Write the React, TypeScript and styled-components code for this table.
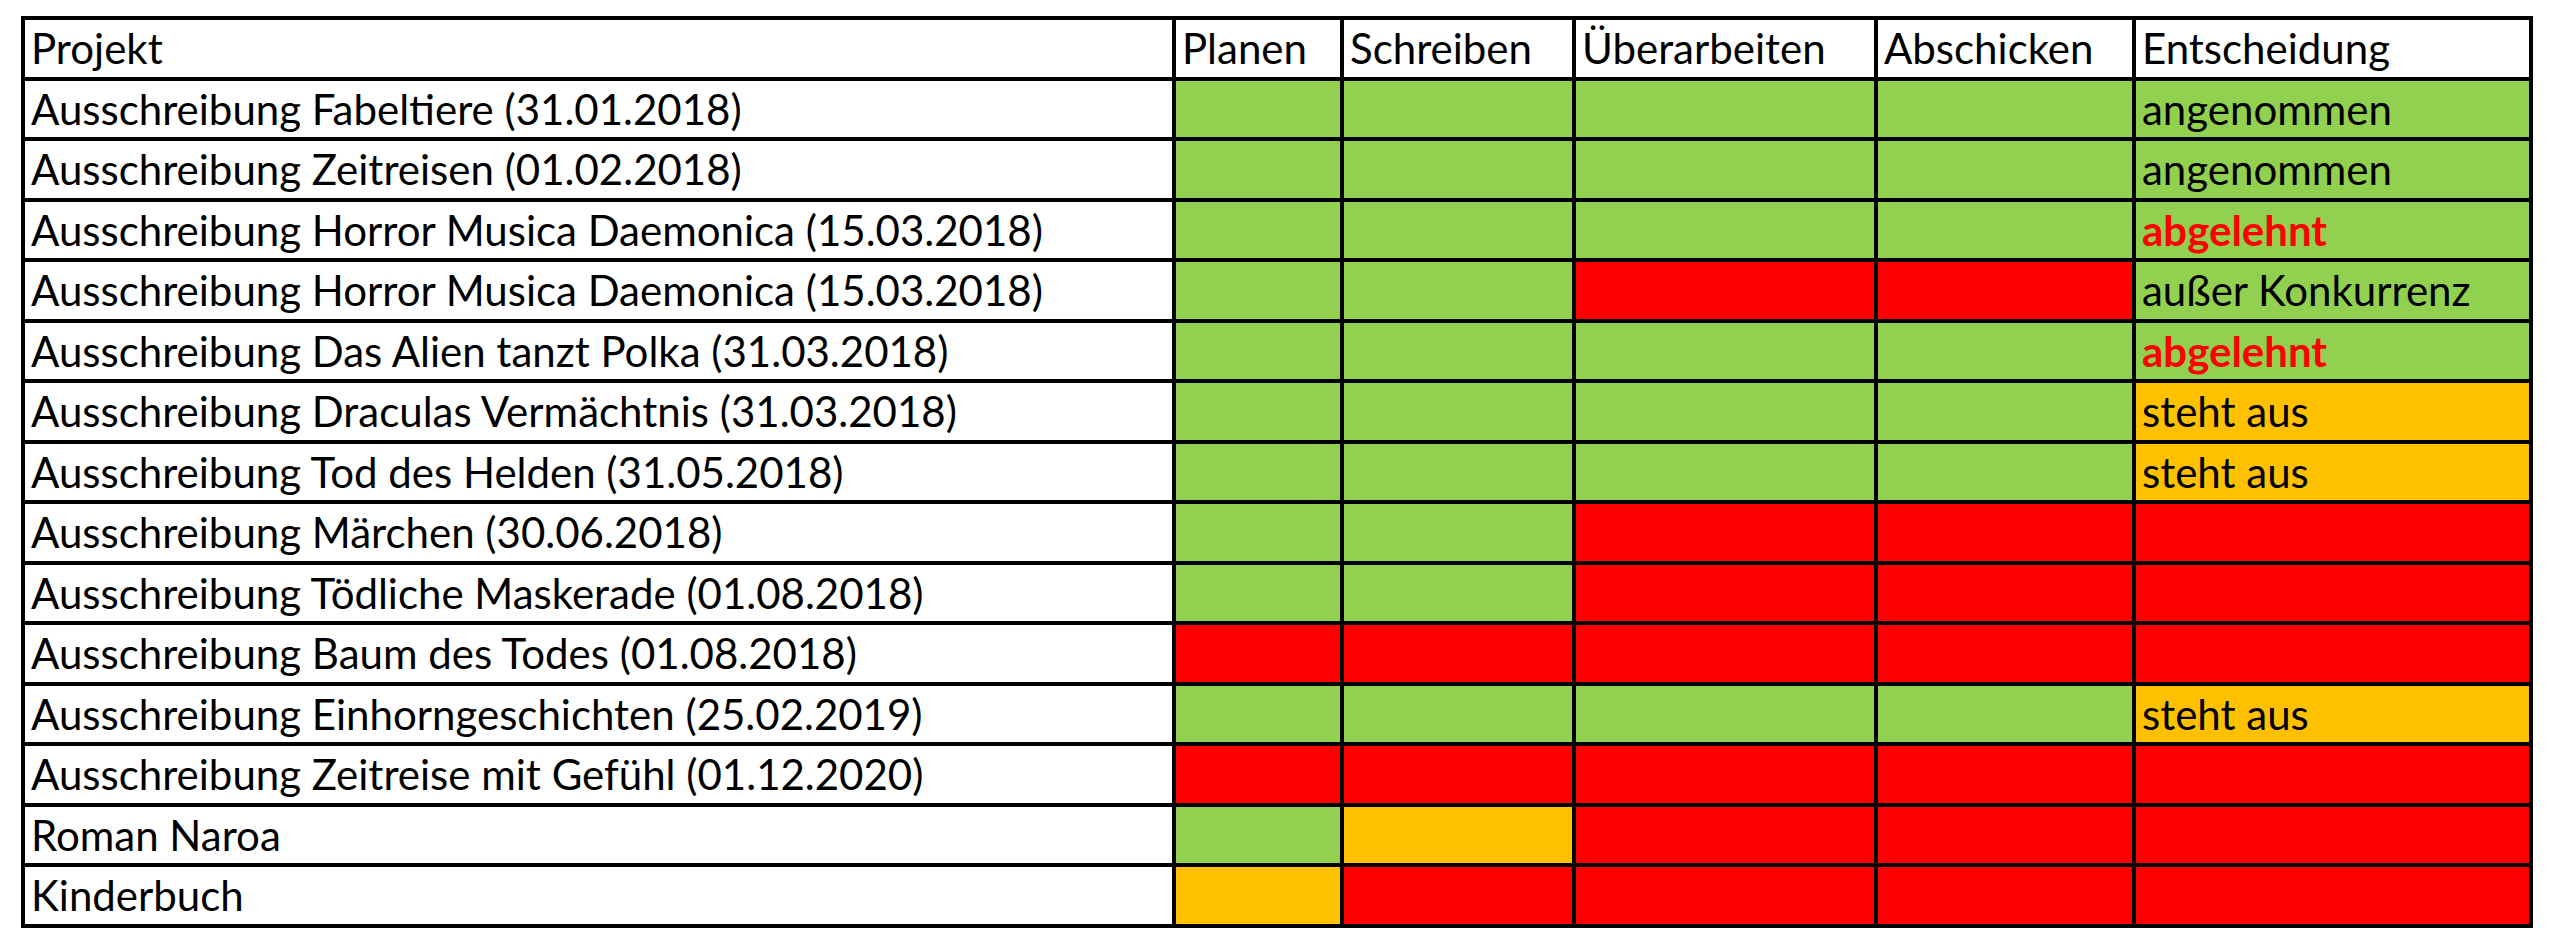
import React from "react";
import styled, { createGlobalStyle } from "styled-components";

type Fill = "none" | "green" | "red" | "orange";

const fills: Record<Fill, string> = {
  none: "#ffffff",
  green: "#92d050",
  red: "#ff0000",
  orange: "#ffc000",
};

const GlobalStyle = createGlobalStyle`
  html, body {
    margin: 0;
    padding: 0;
    background: #ffffff;
  }
  body {
    font-family: Lato, "Liberation Sans", sans-serif;
  }
`;

const Page = styled.div`
  padding: 16px 0 0 21px;
`;

const Sheet = styled.div`
  display: grid;
  grid-template-columns: 1147px 164px 228px 298px 254px 393px;
  grid-auto-rows: 56.5px;
  gap: 4px;
  padding: 4px;
  width: max-content;
  background: #000000;
`;

const Cell = styled.div<{ $fill: Fill; $bad?: boolean }>`
  display: flex;
  align-items: center;
  padding: 0 0 0 6px;
  background: ${(p) => fills[p.$fill]};
  color: ${(p) => (p.$bad ? "#ff0000" : "#000000")};
  font-weight: ${(p) => (p.$bad ? 700 : 400)};
  font-size: 42px;
  line-height: 1;
  white-space: nowrap;
  overflow: hidden;
`;

type Row = {
  name: string;
  steps: Fill[];
  decision: Fill;
  text?: string;
  bad?: boolean;
};

const G: Fill = "green";
const R: Fill = "red";
const O: Fill = "orange";

const rows: Row[] = [
  { name: "Ausschreibung Fabeltiere (31.01.2018)", steps: [G, G, G, G], decision: G, text: "angenommen" },
  { name: "Ausschreibung Zeitreisen (01.02.2018)", steps: [G, G, G, G], decision: G, text: "angenommen" },
  { name: "Ausschreibung Horror Musica Daemonica (15.03.2018)", steps: [G, G, G, G], decision: G, text: "abgelehnt", bad: true },
  { name: "Ausschreibung Horror Musica Daemonica (15.03.2018)", steps: [G, G, R, R], decision: G, text: "außer Konkurrenz" },
  { name: "Ausschreibung Das Alien tanzt Polka (31.03.2018)", steps: [G, G, G, G], decision: G, text: "abgelehnt", bad: true },
  { name: "Ausschreibung Draculas Vermächtnis (31.03.2018)", steps: [G, G, G, G], decision: O, text: "steht aus" },
  { name: "Ausschreibung Tod des Helden (31.05.2018)", steps: [G, G, G, G], decision: O, text: "steht aus" },
  { name: "Ausschreibung Märchen (30.06.2018)", steps: [G, G, R, R], decision: R },
  { name: "Ausschreibung Tödliche Maskerade (01.08.2018)", steps: [G, G, R, R], decision: R },
  { name: "Ausschreibung Baum des Todes (01.08.2018)", steps: [R, R, R, R], decision: R },
  { name: "Ausschreibung Einhorngeschichten (25.02.2019)", steps: [G, G, G, G], decision: O, text: "steht aus" },
  { name: "Ausschreibung Zeitreise mit Gefühl (01.12.2020)", steps: [R, R, R, R], decision: R },
  { name: "Roman Naroa", steps: [G, O, R, R], decision: R },
  { name: "Kinderbuch", steps: [O, R, R, R], decision: R },
];

const headers = ["Projekt", "Planen", "Schreiben", "Überarbeiten", "Abschicken", "Entscheidung"];

export default function App() {
  return (
    <>
      <GlobalStyle />
      <Page>
        <Sheet>
          {headers.map((h) => (
            <Cell key={h} $fill="none">
              {h}
            </Cell>
          ))}
          {rows.map((row, i) => (
            <React.Fragment key={i}>
              <Cell $fill="none">{row.name}</Cell>
              {row.steps.map((s, j) => (
                <Cell key={j} $fill={s} />
              ))}
              <Cell $fill={row.decision} $bad={row.bad}>
                {row.text}
              </Cell>
            </React.Fragment>
          ))}
        </Sheet>
      </Page>
    </>
  );
}
